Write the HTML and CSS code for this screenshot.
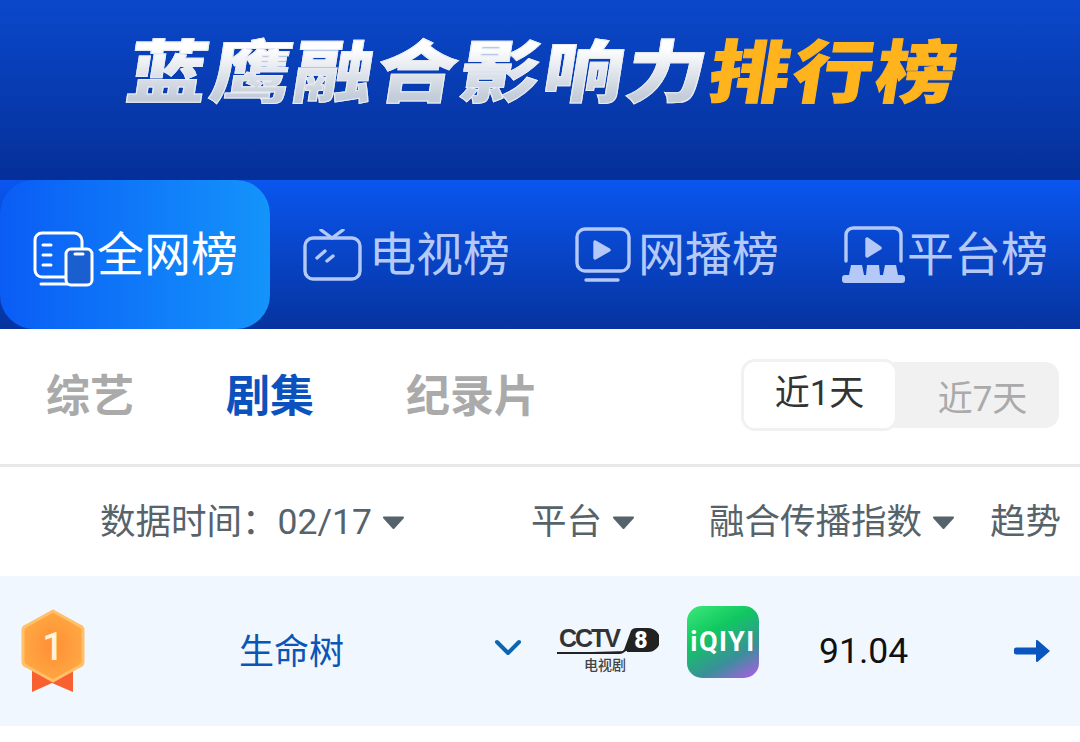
FILE: index.html
```html
<!DOCTYPE html>
<html lang="zh-CN">
<head>
  <meta charset="UTF-8">
  <meta name="viewport" content="width=device-width, initial-scale=1.0">
  <title>蓝鹰融合影响力排行榜</title>
  <link rel="stylesheet" href="styles.css">
</head>
<body>
  <header class="banner">
    <h1 class="banner-title"><span class="title-white">蓝鹰融合影响力</span><span class="title-gold">排行榜</span></h1>
  </header>

  <nav class="tabs">
    <a class="tab tab-active">
      <svg class="tab-icon icon-net" width="62" height="56" viewBox="0 0 62 56" fill="none" stroke="#fff" stroke-width="3" stroke-linecap="round">
        <path d="M34 46H9a7 7 0 0 1-7-7V9a7 7 0 0 1 7-7h32a8 8 0 0 1 8 8v6"/>
        <path d="M10 14h8M10 24h8M10 34h8M8 53h26"/>
        <rect x="33" y="18" width="26" height="36" rx="5" fill="#1a5fd0"/>
        <path d="M42 23h8"/>
      </svg>
      <span class="tab-label">全网榜</span>
    </a>
    <a class="tab">
      <svg class="tab-icon" width="59" height="52" viewBox="0 0 59 52" fill="none" stroke="#b4c9f7" stroke-width="3.4" stroke-linecap="round">
        <rect x="2" y="9" width="55" height="41" rx="8"/>
        <path d="M18 1l11 8 11-8M14 29l8-7M24 32l6-5"/>
      </svg>
      <span class="tab-label">电视榜</span>
    </a>
    <a class="tab">
      <svg class="tab-icon icon-web" width="56" height="56" viewBox="0 0 56 56" fill="none" stroke="#b4c9f7" stroke-width="3.4" stroke-linecap="round">
        <rect x="2" y="2" width="52" height="42" rx="8"/>
        <path d="M20 15v16l14-8z" fill="#b4c9f7" stroke-linejoin="round"/>
        <path d="M11 53h32"/>
      </svg>
      <span class="tab-label">网播榜</span>
    </a>
    <a class="tab">
      <svg class="tab-icon icon-platform" width="63" height="60" viewBox="0 0 63 60" fill="none" stroke="#b4c9f7" stroke-width="3.4" stroke-linecap="round">
        <path d="M4 36V10a7 7 0 0 1 7-7h41a7 7 0 0 1 7 7v26"/>
        <path d="M25 14v17l13-8z" fill="#b4c9f7" stroke-linejoin="round"/>
        <path d="M7 50l2-10h11l2 10zM24 50l1-10h12l1 10zM41 50l2-10h11l2 10z" fill="#b4c9f7" stroke="none"/>
        <rect x="0" y="50" width="63" height="8" rx="3" fill="#b4c9f7" stroke="none"/>
      </svg>
      <span class="tab-label">平台榜</span>
    </a>
  </nav>

  <section class="filters">
    <div class="categories">
      <span class="category">综艺</span>
      <span class="category category-active">剧集</span>
      <span class="category">纪录片</span>
    </div>
    <div class="range">
      <span class="range-item range-active">近1天</span>
      <span class="range-item">近7天</span>
    </div>
  </section>

  <div class="table-head">
    <div class="col-date">数据时间：02/17<svg class="caret" width="23" height="13" viewBox="0 0 23 13"><path d="M2 1.500h19L11.500 12z" fill="#56636b" stroke="#56636b" stroke-width="2" stroke-linejoin="round"/></svg></div>
    <div class="col-platform">平台<svg class="caret" width="23" height="13" viewBox="0 0 23 13"><path d="M2 1.500h19L11.500 12z" fill="#56636b" stroke="#56636b" stroke-width="2" stroke-linejoin="round"/></svg></div>
    <div class="col-index">融合传播指数<svg class="caret" width="23" height="13" viewBox="0 0 23 13"><path d="M2 1.500h19L11.500 12z" fill="#56636b" stroke="#56636b" stroke-width="2" stroke-linejoin="round"/></svg></div>
    <div class="col-trend">趋势</div>
  </div>

  <div class="row">
    <svg class="medal" width="66" height="84" viewBox="0 0 66 84">
      <defs>
        <radialGradient id="medalFill" cx="50%" cy="50%" r="60%">
          <stop offset="0" stop-color="#ff8f35"/>
          <stop offset="1" stop-color="#ffab45"/>
        </radialGradient>
      </defs>
      <path d="M12 56v27l20-9 21 9V56z" fill="#f8602f"/>
      <path d="M33 2l27 15a5 5 0 0 1 3 5v30a5 5 0 0 1-3 5L33 72 6 57a5 5 0 0 1-3-5V22a5 5 0 0 1 3-5z" fill="url(#medalFill)" stroke="#ffc069" stroke-width="3" stroke-linejoin="round"/>
      <text class="medal-num" x="33" y="51" text-anchor="middle">1</text>
    </svg>
    <div class="show-name">生命树</div>
    <svg class="chevron" width="28" height="18" viewBox="0 0 28 18" fill="none" stroke="#0e66b0" stroke-width="4" stroke-linecap="round" stroke-linejoin="round"><path d="M3 3l11 11L25 3"/></svg>
    <svg class="cctv" width="102" height="54" viewBox="0 -4 102 54">
      <text class="cctv-name" x="2" y="19" textLength="62">CCTV</text>
      <path d="M0 25h62q4 0 6-3L75 3q1-2 4-2h12a11 11 0 0 1 0 22H70" fill="#222" stroke="#222" stroke-width="2"/>
      <text class="cctv-num" x="84" y="20" text-anchor="middle">8</text>
      <text class="cctv-sub" x="27" y="42">电视剧</text>
    </svg>
    <div class="iqiyi">iQIYI</div>
    <div class="score">91.04</div>
    <svg class="trend-arrow" width="37" height="24" viewBox="0 0 37 24"><path d="M3 8.500h19V2a1 1 0 0 1 1.700-.7L36 12 23.700 22.700A1 1 0 0 1 22 22v-6.500H3a3.500 3.500 0 0 1 0-7z" fill="#0b55c0"/></svg>
  </div>
</body>
</html>
```

FILE: styles.css
```css
body {
  font-family: Roboto, "Noto Sans CJK SC", sans-serif;
  background-color: #fff;
  margin: 0;
}
.banner {
  height: 180px;
  background: linear-gradient(180deg, #0a48cb, #052f98);
  display: flex;
  justify-content: center;
  padding-top: 26px;
  box-sizing: border-box;
}
.banner-title {
  margin: 0 0 0 10px;
  font-family: "Noto Sans CJK SC", sans-serif;
  font-size: 68px;
  font-weight: 900;
  line-height: 84px;
  height: 84px;
  letter-spacing: 2.500px;
  white-space: nowrap;
  transform: skewX(-9deg) scaleX(1.18);
}
.title-white {
  background: linear-gradient(180deg, #ffffff 30%, #c3ccd9 80%);
  -webkit-background-clip: text;
  background-clip: text;
  color: transparent;
  -webkit-text-stroke: 1px #e8ecf2;
}
.title-gold {
  color: #ffb31c;
  -webkit-text-stroke: 1px #ffb31c;
}
.tabs {
  height: 149px;
  background: linear-gradient(180deg, #0a56ef, #06339f);
  display: flex;
}
.tab {
  width: 270px;
  box-sizing: border-box;
  padding-left: 33px;
  display: flex;
  align-items: center;
  gap: 7px;
  font-size: 47px;
  color: #b4c9f7;
}
.tab-label {
  margin-bottom: 8px;
}
.tab-active {
  background: linear-gradient(90deg, #0a5cf5, #1494fb);
  border-radius: 34px;
  color: #fff;
}
.icon-net {
  margin-top: 8px;
  margin-right: -5px;
}
.icon-web {
  margin-left: 2px;
}
.icon-platform {
  margin-left: -1px;
  margin-right: -5px;
}
.filters {
  height: 135px;
  border-bottom: 3px solid #e8e8e8;
  display: flex;
  align-items: center;
  justify-content: space-between;
  padding: 0 21px 0 46px;
}
.categories {
  display: flex;
  gap: 92px;
  margin-bottom: 7px;
}
.category {
  font-size: 44px;
  font-weight: 700;
  color: #aaa;
}
.category-active {
  color: #0b52bf;
}
.range {
  display: flex;
  align-items: center;
  height: 66px;
  width: 318px;
  margin-bottom: 3px;
  background-color: #f1f1f1;
  border-radius: 14px;
}
.range-item {
  flex: 1;
  padding-left: 8px;
  text-align: center;
  font-size: 35px;
  color: #aaa;
}
.range-active {
  flex: 0 0 157px;
  padding-left: 0;
  height: 72px;
  line-height: 64px;
  box-sizing: border-box;
  background-color: #fff;
  border: 3px solid #f1f1f1;
  border-radius: 14px;
  color: #333;
}
.table-head {
  height: 109px;
  box-sizing: border-box;
  padding-bottom: 6px;
  display: flex;
  align-items: center;
  font-size: 35.500px;
  color: #56636b;
}
.caret {
  margin-left: 10px;
  vertical-align: 5px;
}
.col-date {
  margin-left: 100px;
  width: 431px;
}
.col-platform {
  width: 178px;
}
.col-index {
  width: 281px;
}
.row {
  height: 150px;
  background-color: #f0f7ff;
  display: flex;
  align-items: center;
}
.medal {
  margin-left: 20px;
  flex-shrink: 0;
}
.medal-num {
  font-family: Roboto, sans-serif;
  font-size: 38px;
  font-weight: 500;
  fill: #fff3dc;
}
.show-name {
  margin-left: 153px;
  margin-bottom: 6px;
  width: 255px;
  font-size: 35px;
  color: #0b55b5;
}
.chevron {
  flex-shrink: 0;
  margin-bottom: 6px;
}
.cctv {
  margin-left: 35px;
  flex-shrink: 0;
}
.cctv-name {
  font-family: "Liberation Sans", sans-serif;
  font-size: 25px;
  font-weight: 700;
  fill: #333;
}
.cctv-num {
  font-size: 23px;
  font-weight: 900;
  fill: #fff;
}
.cctv-sub {
  font-size: 14px;
  font-weight: 500;
  fill: #444;
}
.iqiyi {
  margin-left: 28px;
  margin-bottom: 18px;
  width: 72px;
  height: 72px;
  border-radius: 15px;
  background: linear-gradient(150deg, #3de87a 0%, #10c860 35%, #3a8f9a 70%, #b35ae8 100%);
  color: #fff;
  font-size: 27px;
  font-weight: 700;
  letter-spacing: 1.500px;
  text-align: center;
  line-height: 72px;
  flex-shrink: 0;
}
.score {
  margin-left: 60px;
  width: 195px;
  font-size: 35.500px;
  color: #111;
}
.trend-arrow {
  flex-shrink: 0;
  margin-bottom: 1px;
}
```
